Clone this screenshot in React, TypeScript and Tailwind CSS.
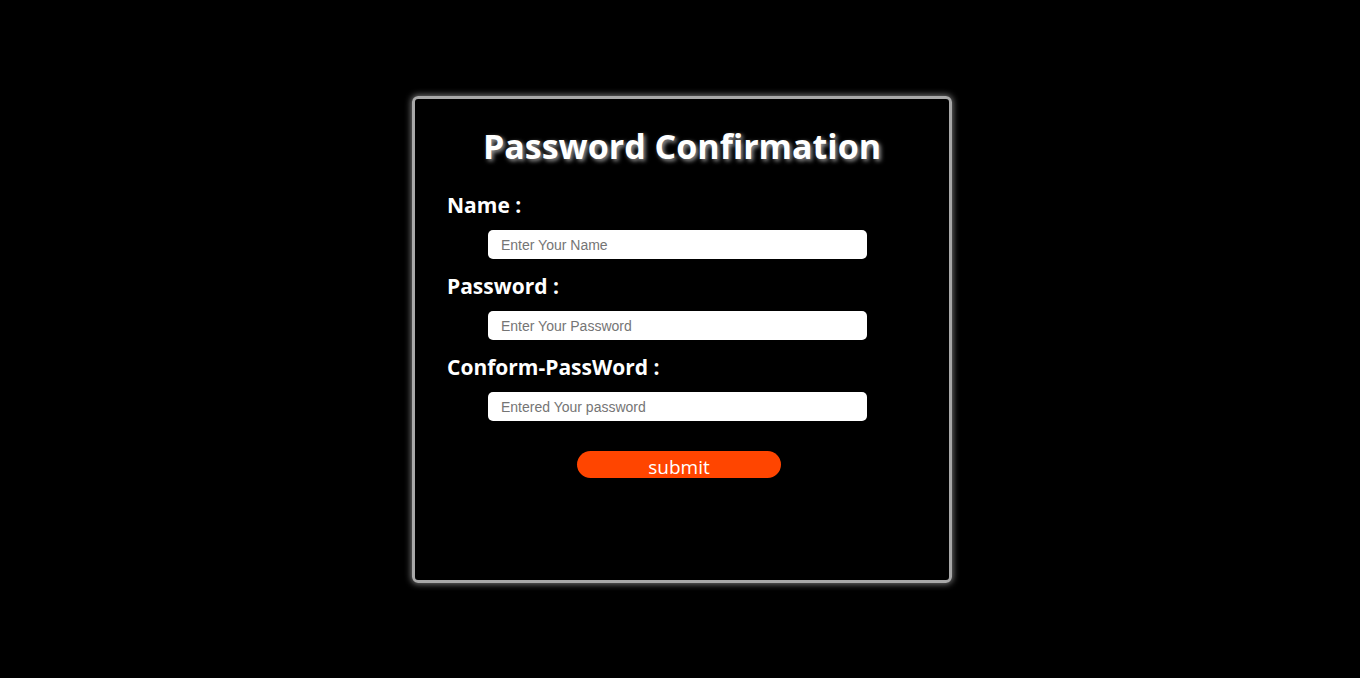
import React from "react";

const fields = [
  { label: "Name :", placeholder: "Enter Your Name", type: "text" },
  { label: "Password :", placeholder: "Enter Your Password", type: "password" },
  { label: "Conform-PassWord :", placeholder: "Entered Your password", type: "password" },
];

export default function App() {
  return (
    <div className="min-h-[678px] w-full bg-black pt-[96px] font-['Open_Sans',sans-serif]">
      <div className="ml-[412px] w-[540px] h-[487px] rounded-[6px] border-[3px] border-[#a8a8a8] shadow-[0_0_6px_1px_rgba(200,200,200,0.6)] pt-[24px] pl-[32px]">
        {/* title */}
        <h1 className="-ml-[32px] text-center text-[34px] leading-[46px] font-bold text-white [text-shadow:2px_2px_4px_#9a9a9a]">
          Password Confirmation
        </h1>

        {/* fields */}
        <form className="mt-[21px] flex flex-col" onSubmit={(e) => e.preventDefault()}>
          {fields.map((f) => (
            <div key={f.label} className="flex flex-col h-[81px]">
              <label className="text-[21px] leading-[31px] font-bold text-white">{f.label}</label>
              <input
                type={f.type}
                placeholder={f.placeholder}
                className="mt-[9px] ml-[41px] w-[379px] h-[29px] rounded-[5px] bg-white pl-[13px] text-[14px] font-['Liberation_Sans',Arial,sans-serif] text-black placeholder:text-[#757575] outline-none"
              />
            </div>
          ))}

          <button
            type="submit"
            className="mt-[18px] ml-[130px] w-[204px] h-[27px] rounded-full bg-[#ff4500] text-[19px] leading-[32px] text-white font-['Open_Sans',sans-serif]"
          >
            submit
          </button>
        </form>
      </div>
    </div>
  );
}
